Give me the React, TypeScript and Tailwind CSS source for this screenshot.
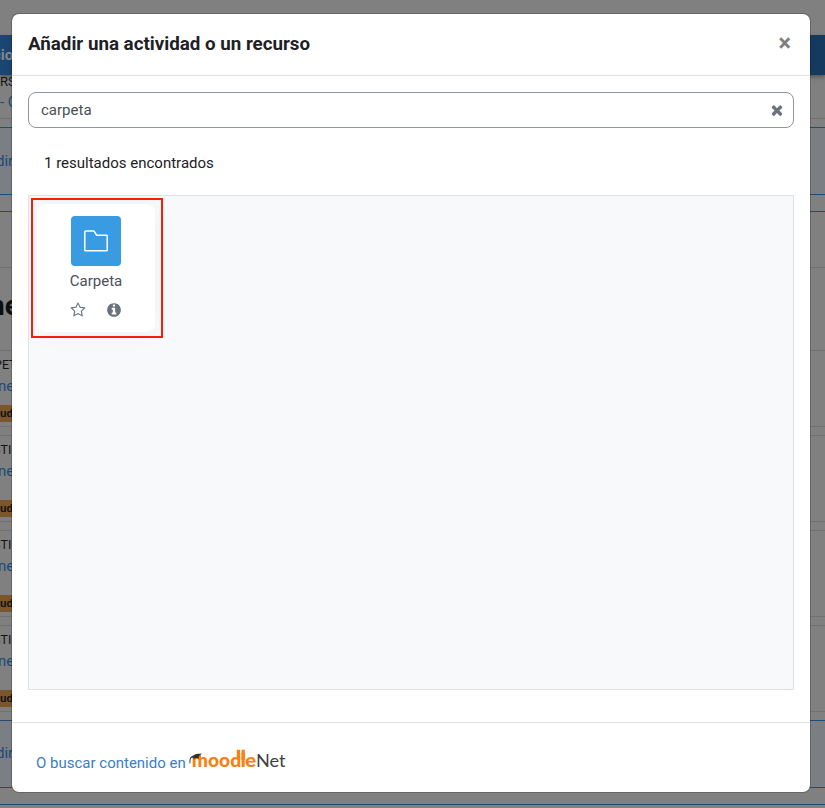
const TIMES =
  'M1490 1322q0 40-28 68l-136 136q-28 28-68 28t-68-28l-294-294-294 294q-28 28-68 28t-68-28l-136-136q-28-28-28-68t28-68l294-294-294-294q-28-28-28-68t28-68l136-136q28-28 68-28t68 28l294 294 294-294q28-28 68-28t68 28l136 136q28 28 28 68t-28 68l-294 294 294 294q28 28 28 68z';
const STAR =
  'M1201 1004l306-297-422-62-189-382-189 382-422 62 306 297-73 421 378-199 377 199zm527-357q0 22-26 48l-363 354 86 500q1 7 1 20 0 50-41 50-19 0-40-12l-449-236-449 236q-22 12-40 12-21 0-31.5-14.5t-10.5-35.5q0-6 2-20l86-500-364-354q-25-27-25-48 0-37 56-46l502-73 225-455q19-41 49-41t49 41l225 455 502 73q56 9 56 46z';
const INFO =
  'M1152 1376v-160q0-14-9-23t-23-9h-96v-512q0-14-9-23t-23-9h-320q-14 0-23 9t-9 23v160q0 14 9 23t23 9h96v320h-96q-14 0-23 9t-9 23v160q0 14 9 23t23 9h448q14 0 23-9t9-23zm-128-896v-160q0-14-9-23t-23-9h-192q-14 0-23 9t-9 23v160q0 14 9 23t23 9h192q14 0 23-9t9-23zm640 416q0 209-103 385.5t-279.5 279.5-385.5 103-385.5-103-279.5-279.5-103-385.5 103-385.5 279.5-279.5 385.5-103 385.5 103 279.5 279.5 103 385.5z';

function Glyph({ d }: { d: string }) {
  return (
    <svg viewBox="0 0 1792 1792" className="size-4 shrink-0 fill-[#6a737b]">
      <path d={d} />
    </svg>
  );
}

function MoodleNetLogo() {
  return (
    <svg viewBox="0 0 98 24" className="block h-6 w-[98px] shrink-0">
      <g className="fill-[#f98012] font-['Lato'] text-[18px] font-black">
        <text x="2.8" y="19" textLength="49.4" lengthAdjust="spacingAndGlyphs">mood</text>
        <text x="51.4" y="19" textLength="5.4" lengthAdjust="spacingAndGlyphs">l</text>
        <text x="56" y="19" textLength="11.2" lengthAdjust="spacingAndGlyphs">e</text>
        <path d="M47.8 1.7h3.3v10h-3.3zM52.5 1.7h3.3V12h-3.3zM4 8.5l8-1.5v4H4z" />
      </g>
      <text x="67" y="19" textLength="29.6" lengthAdjust="spacingAndGlyphs" className="fill-[#404041] font-['Lato'] text-[17.5px]">
        Net
      </text>
      <path d="M1.5 9 L7 6 L13 5.6 L9.8 8.2 L10 10.6 Q7 9.2 4.6 11.4 L4.4 9.4 L2.2 10 Q1 12 1.3 15.5 L.5 15.5 Q.2 11 1.5 9z" fill="#333" />
    </svg>
  );
}

interface ActivityProps {
  kind: string;
  kindOffset: string;
  size: string;
  badgeGap: string;
}

function Activity({ kind, kindOffset, size, badgeGap }: ActivityProps) {
  return (
    <div className={`${size} mb-2 shrink-0 border-y border-[#6f7174]`}>
      <div className={`${kindOffset} mt-[5px] h-[17px] text-[12.5px] leading-[17px] text-[#101214]`}>{kind}</div>
      <div className="-ml-[2px] mt-[3px] text-[15px] leading-5 text-[#1a4a78]">nes</div>
      <div className={`${badgeGap} h-[17px] w-20 bg-[#7d552a] text-[11.5px] leading-[17px] font-bold text-[#151515]`}>
        udiantes
      </div>
    </div>
  );
}

function CoursePage() {
  return (
    <div className="flex h-[808px] flex-col overflow-hidden bg-[#808080] whitespace-nowrap">
      <div className="h-[35px] shrink-0" />
      <div className="h-10 shrink-0 bg-gradient-to-r from-[#1b4775] to-[#153a60] to-5% shadow-[0_2px_4px_rgba(0,0,0,0.35)]">
        <span className="-ml-[7px] text-[15px] leading-10 font-bold text-[#80878e]">cion</span>
      </div>
      <div className="h-11 shrink-0 border-b border-[#707173]">
        <div className="text-[13px] leading-[14px] text-[#101214]">RSO</div>
        <div className="mt-[3px] text-[15px] leading-5 text-[#1a4a78]">- C</div>
      </div>
      <div className="mt-2 h-[68px] shrink-0 border-y border-[#204c75] bg-[#7b7e82]">
        <div className="-ml-[4px] text-[15px] leading-[66px] text-[#1a4a78]">dir</div>
      </div>
      <div className="mt-4 h-[57px] shrink-0 border-y border-t-[#204c75] border-b-[#707173]" />
      <div className="h-[82px] shrink-0">
        <div className="-ml-[11px] pt-[22px] text-[28px] leading-[32px] font-bold text-[#0d0f11]">nes</div>
      </div>
      <Activity kind="PETA" kindOffset="-ml-[6px]" size="h-[77px]" badgeGap="mt-[9px]" />
      <Activity kind="STIO" kindOffset="-ml-[7px]" size="h-[87px]" badgeGap="mt-[19px]" />
      <Activity kind="STIO" kindOffset="-ml-[7px]" size="h-[87px]" badgeGap="mt-[19px]" />
      <Activity kind="STIO" kindOffset="-ml-[7px]" size="h-[87px]" badgeGap="mt-[19px]" />
      <div className="h-[68px] shrink-0 border-y border-[#204c75] bg-[#7b7e82]">
        <div className="-ml-[4px] text-[15px] leading-[64px] text-[#1a4a78]">dir</div>
      </div>
      <div className="mt-4 h-5 shrink-0 border-t border-[#204c75]" />
    </div>
  );
}

function Chooser() {
  return (
    <div className="flex h-[780px] w-[800px] flex-col rounded-lg border border-black/20 bg-white bg-clip-padding">
      <header className="flex h-[62px] shrink-0 items-center justify-between border-b border-[#dee2e6] pr-[19px] pb-0.5 pl-4">
        <h5 className="text-[18.75px] leading-7 font-bold">Añadir una actividad o un recurso</h5>
        <button className="pt-px text-[23.5px] leading-none font-bold text-[#7f7f7f]">×</button>
      </header>
      <main className="flex grow flex-col px-4 pt-4">
        <div className="flex h-9 shrink-0 items-center justify-between rounded-lg border border-[#8f959e] pr-2 pl-3 text-[#495057]">
          <span>carpeta</span>
          <Glyph d={TIMES} />
        </div>
        <div className="mt-6 pl-4 leading-[22px]">1 resultados encontrados</div>
        <div className="mt-[21px] h-[495px] shrink-0 overflow-hidden border border-[#dee2e6] bg-[#f8f9fa] p-0.5">
          <div className="h-[140px] w-[132px] border-2 border-[#fa1e08] p-1">
            <div className="flex h-32 w-[118px] flex-col items-center rounded-lg bg-white pt-3 shadow-[0_0_30px_rgba(0,0,0,0.04)]">
              <div className="flex size-[50px] shrink-0 items-center justify-center rounded bg-[#399be2]">
                <svg viewBox="0 0 24 24" className="size-6 fill-none stroke-white">
                  <path d="M.8 21.2V2.7Q.8 2 1.5 2h7.8q.7 0 1.1.6l2.2 3.6h10q.6 0 .6.6v14.4q0 .6-.6.6H1.4q-.6 0-.6-.6z" strokeWidth="1.5" />
                </svg>
              </div>
              <div className="mt-1 leading-[22px] text-[#495057]">Carpeta</div>
              <div className="mt-[10px] flex gap-5">
                <Glyph d={STAR} />
                <Glyph d={INFO} />
              </div>
            </div>
          </div>
        </div>
      </main>
      <footer className="flex h-[70px] shrink-0 items-center border-t border-[#dee2e6] pl-6">
        <a className="pt-[11px] text-[#3c7dc4]">O buscar contenido en</a>
        <span className="ml-[3px] flex pt-[4px]">
          <MoodleNetLogo />
        </span>
      </footer>
    </div>
  );
}

export default function App() {
  return (
    <div className="relative h-[808px] overflow-hidden font-['Roboto',sans-serif] text-[15px] leading-[22px] text-[#1d2125]">
      <CoursePage />
      <div className="absolute inset-0 flex items-start pt-[13px] pl-[11px]">
        <Chooser />
      </div>
    </div>
  );
}
